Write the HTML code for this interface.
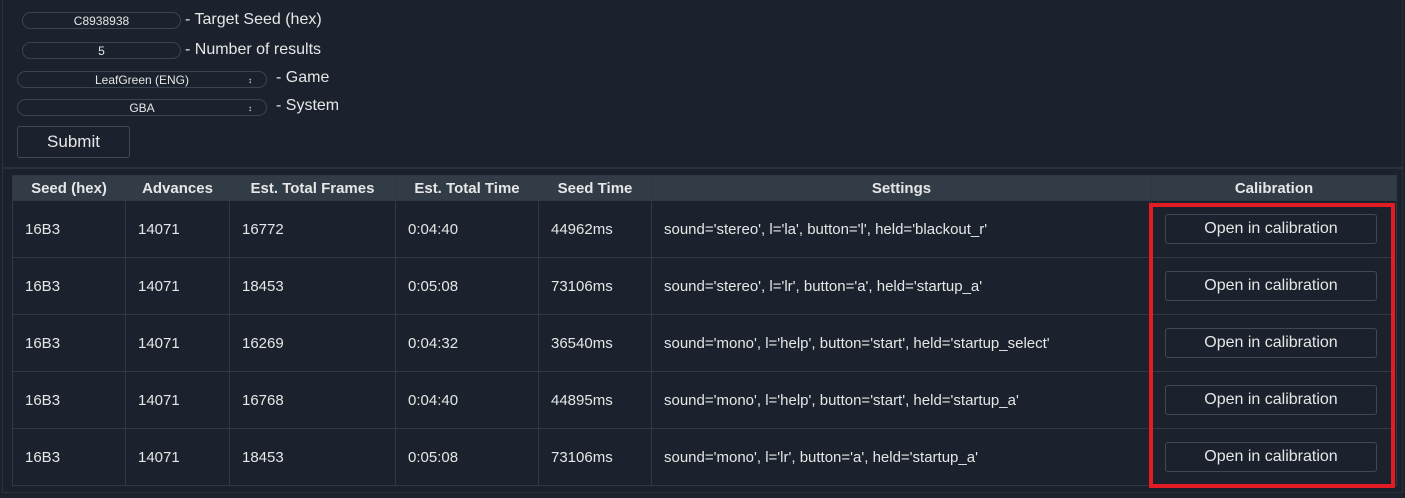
<!DOCTYPE html>
<html><head><style>
body{margin:0;width:1405px;height:498px;background:#1b222d;font-family:"Liberation Sans",sans-serif;color:#e6e6e6;position:relative;overflow:hidden}
.a{position:absolute}
.inp{position:absolute;border:1px solid #3a4450;border-radius:10px;height:17px;font-size:12px;text-align:center;line-height:17px;color:#e6e6e6;box-sizing:border-box}
.lbl{position:absolute;font-size:16px;line-height:20px}
table{position:absolute;left:12px;top:175px;border-collapse:collapse;font-size:15px}
td,th{border:1px solid #2f3944;padding:0 0 0 12px;text-align:left;box-sizing:border-box}
th{background:#323c47;height:25px;font-weight:bold;text-align:center;padding:0;font-size:15px}
td{height:57px}
.btn{border:1px solid #3f4955;border-radius:3px;width:212px;height:30px;line-height:28px;text-align:center;font-size:16px;box-sizing:border-box;margin-left:1px}
</style></head><body>
<div class="a" style="left:2px;top:0;width:1401px;height:168px;border:1px solid #2a323d;border-top:none;box-sizing:border-box"></div>
<div class="a" style="left:2px;top:168px;width:1401px;height:325px;border:1px solid #2a323d;box-sizing:border-box"></div>
<div class="inp" style="left:22px;top:12px;width:159px">C8938938</div><div class="lbl" style="left:185px;top:10px">- Target Seed (hex)</div>
<div class="inp" style="left:22px;top:42px;width:159px">5</div><div class="lbl" style="left:185px;top:40px">- Number of results</div>
<div class="inp" style="left:17px;top:71px;width:250px">LeafGreen (ENG)<span style="position:absolute;right:14px;font-size:8px">↕</span></div><div class="lbl" style="left:276px;top:68px">- Game</div>
<div class="inp" style="left:17px;top:99px;width:250px">GBA<span style="position:absolute;right:14px;font-size:8px">↕</span></div><div class="lbl" style="left:276px;top:96px">- System</div>
<div class="a" style="left:17px;top:126px;width:113px;height:32px;border:1px solid #3f4955;border-radius:3px;box-sizing:border-box;text-align:center;line-height:30px;font-size:17px">Submit</div>
<table>
<tr><th style="width:113px">Seed (hex)</th><th style="width:104px">Advances</th><th style="width:166px">Est. Total Frames</th><th style="width:143px">Est. Total Time</th><th style="width:113px">Seed Time</th><th style="width:500px">Settings</th><th style="width:245px">Calibration</th></tr>
<tr><td>16B3</td><td>14071</td><td>16772</td><td>0:04:40</td><td>44962ms</td><td>sound='stereo', l='la', button='l', held='blackout_r'</td><td><div class="btn">Open in calibration</div></td></tr>
<tr><td>16B3</td><td>14071</td><td>18453</td><td>0:05:08</td><td>73106ms</td><td>sound='stereo', l='lr', button='a', held='startup_a'</td><td><div class="btn">Open in calibration</div></td></tr>
<tr><td>16B3</td><td>14071</td><td>16269</td><td>0:04:32</td><td>36540ms</td><td>sound='mono', l='help', button='start', held='startup_select'</td><td><div class="btn">Open in calibration</div></td></tr>
<tr><td>16B3</td><td>14071</td><td>16768</td><td>0:04:40</td><td>44895ms</td><td>sound='mono', l='help', button='start', held='startup_a'</td><td><div class="btn">Open in calibration</div></td></tr>
<tr><td>16B3</td><td>14071</td><td>18453</td><td>0:05:08</td><td>73106ms</td><td>sound='mono', l='lr', button='a', held='startup_a'</td><td><div class="btn">Open in calibration</div></td></tr>
</table>
<div class="a" style="left:1149px;top:203px;width:246px;height:285px;border:4px solid #e31b23;box-sizing:border-box"></div>
</body></html>
